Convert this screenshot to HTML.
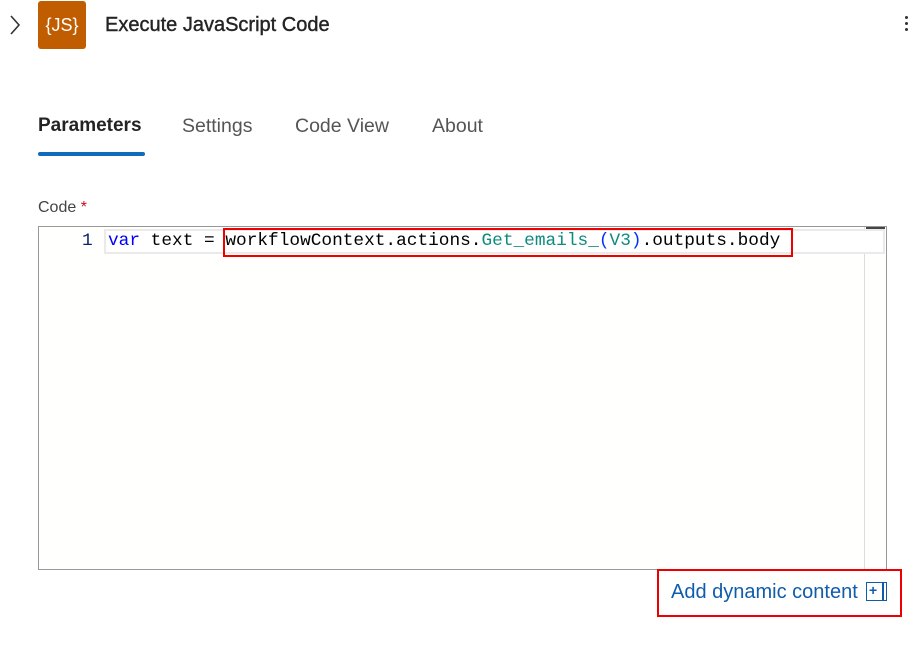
<!DOCTYPE html>
<html><head><meta charset="utf-8"><style>
body{margin:0;width:913px;height:650px;background:#fff;font-family:"Liberation Sans",sans-serif;position:relative;overflow:hidden}
.a{position:absolute}
.tab{position:absolute;top:115px;font-size:19.5px;color:#555}
.mono{font-family:"Liberation Mono",monospace;font-size:17.8px;white-space:pre}
</style></head><body>
<svg class="a" style="left:8px;top:14px" width="14" height="22" viewBox="0 0 14 22"><path d="M3 2 L11 11 L3 20" fill="none" stroke="#333" stroke-width="1.6"/></svg>
<div class="a" style="left:38px;top:1px;width:48px;height:48px;background:#c05d00;border-radius:3px;color:#fff;font-size:18px;line-height:48px;text-align:center">{JS}</div>
<div class="a" style="left:105px;top:14px;font-size:20px;color:#242424;-webkit-text-stroke:0.4px #242424">Execute JavaScript Code</div>
<div class="a" style="left:905px;top:16px;width:3px;height:3px;background:#333;border-radius:50%;box-shadow:0 6px 0 #333,0 12px 0 #333"></div>
<div class="tab" style="left:38px;color:#242424;font-weight:bold;font-size:19px">Parameters</div>
<div class="a" style="left:38px;top:152px;width:107px;height:4px;background:#0f6cbd;border-radius:2px"></div>
<div class="tab" style="left:182px">Settings</div>
<div class="tab" style="left:295px">Code View</div>
<div class="tab" style="left:432px">About</div>
<div class="a" style="left:38px;top:199px;font-size:16px;color:#444">Code <span style="color:#c50f1f">*</span></div>
<div class="a" style="left:38px;top:226px;width:847px;height:342px;border:1px solid #999;background:#fffffe"></div>
<div class="a" style="left:864px;top:227px;width:1px;height:342px;background:#ddd"></div>
<div class="a" style="left:866px;top:227px;width:19px;height:3px;background:#444"></div>
<div class="a" style="left:104px;top:229px;width:781px;height:25px;background:#fff;border:2px solid #eaeaea;box-sizing:border-box"></div>
<div class="a mono" style="left:82px;top:230px;line-height:23px;color:#0b216f">1</div>
<div class="a mono" style="left:108px;top:230px;line-height:23px;color:#000"><span style="color:#0000ff">var</span> text = workflowContext.actions.<span style="color:#0e8a7e">Get_emails_</span><span style="color:#0431fa">(</span><span style="color:#0e8a7e">V3</span><span style="color:#0431fa">)</span>.outputs.body</div>
<div class="a" style="left:223px;top:228px;width:566px;height:25px;border:2px solid #e00"></div>
<div class="a" style="left:657px;top:569px;width:241px;height:44px;border:2px solid #e00"></div>
<div class="a" style="left:671px;top:581px;font-size:20px;color:#0f5cad">Add dynamic content</div>
<div class="a" style="left:866px;top:582px;width:21px;height:19px;border:1.5px solid #0f5cad;box-sizing:border-box"></div>
<div class="a" style="left:882px;top:582px;width:1.5px;height:19px;background:#0f5cad"></div>
<div class="a" style="left:869px;top:582px;font-size:14px;color:#0f5cad;font-weight:bold">+</div>
</body></html>
